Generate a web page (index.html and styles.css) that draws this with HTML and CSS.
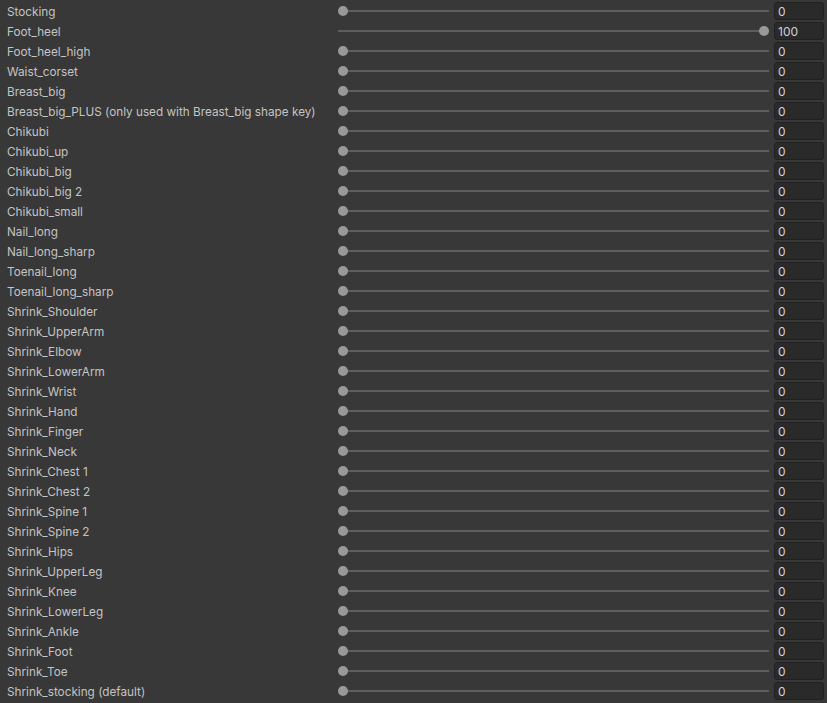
FILE: index.html
```html
<!DOCTYPE html>
<html>
<head>
<meta charset="utf-8">
<link rel="stylesheet" href="styles.css">
</head>
<body>
<div class="list">
<div class="row"><span class="label">Stocking</span><div class="slider"><div class="track"></div><div class="thumb" style="left:0%"></div></div><div class="field">0</div></div>
<div class="row"><span class="label">Foot_heel</span><div class="slider"><div class="track"></div><div class="thumb max" style="left:100%"></div></div><div class="field">100</div></div>
<div class="row"><span class="label">Foot_heel_high</span><div class="slider"><div class="track"></div><div class="thumb" style="left:0%"></div></div><div class="field">0</div></div>
<div class="row"><span class="label">Waist_corset</span><div class="slider"><div class="track"></div><div class="thumb" style="left:0%"></div></div><div class="field">0</div></div>
<div class="row"><span class="label">Breast_big</span><div class="slider"><div class="track"></div><div class="thumb" style="left:0%"></div></div><div class="field">0</div></div>
<div class="row"><span class="label">Breast_big_PLUS (only used with Breast_big shape key)</span><div class="slider"><div class="track"></div><div class="thumb" style="left:0%"></div></div><div class="field">0</div></div>
<div class="row"><span class="label">Chikubi</span><div class="slider"><div class="track"></div><div class="thumb" style="left:0%"></div></div><div class="field">0</div></div>
<div class="row"><span class="label">Chikubi_up</span><div class="slider"><div class="track"></div><div class="thumb" style="left:0%"></div></div><div class="field">0</div></div>
<div class="row"><span class="label">Chikubi_big</span><div class="slider"><div class="track"></div><div class="thumb" style="left:0%"></div></div><div class="field">0</div></div>
<div class="row"><span class="label">Chikubi_big 2</span><div class="slider"><div class="track"></div><div class="thumb" style="left:0%"></div></div><div class="field">0</div></div>
<div class="row"><span class="label">Chikubi_small</span><div class="slider"><div class="track"></div><div class="thumb" style="left:0%"></div></div><div class="field">0</div></div>
<div class="row"><span class="label">Nail_long</span><div class="slider"><div class="track"></div><div class="thumb" style="left:0%"></div></div><div class="field">0</div></div>
<div class="row"><span class="label">Nail_long_sharp</span><div class="slider"><div class="track"></div><div class="thumb" style="left:0%"></div></div><div class="field">0</div></div>
<div class="row"><span class="label">Toenail_long</span><div class="slider"><div class="track"></div><div class="thumb" style="left:0%"></div></div><div class="field">0</div></div>
<div class="row"><span class="label">Toenail_long_sharp</span><div class="slider"><div class="track"></div><div class="thumb" style="left:0%"></div></div><div class="field">0</div></div>
<div class="row"><span class="label">Shrink_Shoulder</span><div class="slider"><div class="track"></div><div class="thumb" style="left:0%"></div></div><div class="field">0</div></div>
<div class="row"><span class="label">Shrink_UpperArm</span><div class="slider"><div class="track"></div><div class="thumb" style="left:0%"></div></div><div class="field">0</div></div>
<div class="row"><span class="label">Shrink_Elbow</span><div class="slider"><div class="track"></div><div class="thumb" style="left:0%"></div></div><div class="field">0</div></div>
<div class="row"><span class="label">Shrink_LowerArm</span><div class="slider"><div class="track"></div><div class="thumb" style="left:0%"></div></div><div class="field">0</div></div>
<div class="row"><span class="label">Shrink_Wrist</span><div class="slider"><div class="track"></div><div class="thumb" style="left:0%"></div></div><div class="field">0</div></div>
<div class="row"><span class="label">Shrink_Hand</span><div class="slider"><div class="track"></div><div class="thumb" style="left:0%"></div></div><div class="field">0</div></div>
<div class="row"><span class="label">Shrink_Finger</span><div class="slider"><div class="track"></div><div class="thumb" style="left:0%"></div></div><div class="field">0</div></div>
<div class="row"><span class="label">Shrink_Neck</span><div class="slider"><div class="track"></div><div class="thumb" style="left:0%"></div></div><div class="field">0</div></div>
<div class="row"><span class="label">Shrink_Chest 1</span><div class="slider"><div class="track"></div><div class="thumb" style="left:0%"></div></div><div class="field">0</div></div>
<div class="row"><span class="label">Shrink_Chest 2</span><div class="slider"><div class="track"></div><div class="thumb" style="left:0%"></div></div><div class="field">0</div></div>
<div class="row"><span class="label">Shrink_Spine 1</span><div class="slider"><div class="track"></div><div class="thumb" style="left:0%"></div></div><div class="field">0</div></div>
<div class="row"><span class="label">Shrink_Spine 2</span><div class="slider"><div class="track"></div><div class="thumb" style="left:0%"></div></div><div class="field">0</div></div>
<div class="row"><span class="label">Shrink_Hips</span><div class="slider"><div class="track"></div><div class="thumb" style="left:0%"></div></div><div class="field">0</div></div>
<div class="row"><span class="label">Shrink_UpperLeg</span><div class="slider"><div class="track"></div><div class="thumb" style="left:0%"></div></div><div class="field">0</div></div>
<div class="row"><span class="label">Shrink_Knee</span><div class="slider"><div class="track"></div><div class="thumb" style="left:0%"></div></div><div class="field">0</div></div>
<div class="row"><span class="label">Shrink_LowerLeg</span><div class="slider"><div class="track"></div><div class="thumb" style="left:0%"></div></div><div class="field">0</div></div>
<div class="row"><span class="label">Shrink_Ankle</span><div class="slider"><div class="track"></div><div class="thumb" style="left:0%"></div></div><div class="field">0</div></div>
<div class="row"><span class="label">Shrink_Foot</span><div class="slider"><div class="track"></div><div class="thumb" style="left:0%"></div></div><div class="field">0</div></div>
<div class="row"><span class="label">Shrink_Toe</span><div class="slider"><div class="track"></div><div class="thumb" style="left:0%"></div></div><div class="field">0</div></div>
<div class="row"><span class="label">Shrink_stocking (default)</span><div class="slider"><div class="track"></div><div class="thumb" style="left:0%"></div></div><div class="field">0</div></div>
</div>
</body>
</html>
```
FILE: styles.css
```css
html, body {
  margin: 0;
  padding: 0;
  background: #383838;
  height: 100%;
  overflow: hidden;
}
body {
  font-family: Inter, "Noto Sans", "Liberation Sans", sans-serif;
  font-size: 11.75px;
  color: #c4c4c4;
}
.list {
  padding-top: 1px;
  display: flex;
  flex-direction: column;
}
.row {
  height: 20px;
  display: flex;
  align-items: center;
  padding-left: 7px;
  padding-right: 3px;
}
.label {
  width: 331px;
  flex: none;
  white-space: nowrap;
  line-height: 20px;
  padding-top: 1px;
  height: 19px;
  box-sizing: content-box;
}
.slider {
  flex: 1;
  position: relative;
  height: 18px;
  display: flex;
  align-items: center;
  margin-right: 5px;
}
.track {
  flex: 1;
  height: 2px;
  background: #5e5e5e;
}
.thumb {
  position: absolute;
  top: 4px;
  width: 10px;
  height: 10px;
  border-radius: 50%;
  background: #999999;
}
.thumb.max {
  margin-left: -10px;
}
.field {
  flex: none;
  width: 45px;
  height: 16px;
  background: #2a2a2a;
  border: 1px solid #212121;
  border-radius: 3px;
  line-height: 17px;
  padding-left: 3px;
  box-sizing: content-box;
  color: #d2d2d2;
  font-size: 12px;
}
```
